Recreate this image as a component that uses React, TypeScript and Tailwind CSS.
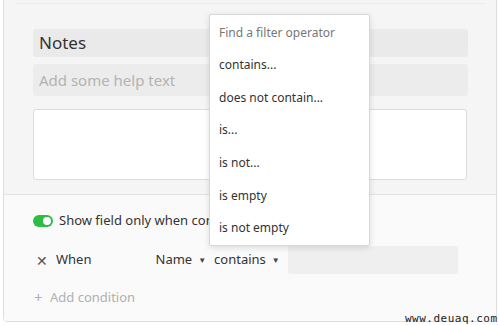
import React from "react";

const font = { fontFamily: '"Noto Sans", "Open Sans", sans-serif' };

const operators = [
  "contains...",
  "does not contain...",
  "is...",
  "is not...",
  "is empty",
  "is not empty",
];

function Caret() {
  return <span className="ml-[6px] text-[8px] text-[#444] relative top-[-1px]">▼</span>;
}

export default function App() {
  return (
    <div className="w-[499px] h-[325px] bg-white relative overflow-hidden" style={font}>
      <div className="absolute left-[3px] right-[2px] top-[-10px] bottom-[3px] border border-[#dedede] rounded-[4px] overflow-hidden flex flex-col">
        {/* field settings */}
        <div className="bg-[#f5f5f5] h-[204px] border-b border-[#e3e3e3] pl-[29px] pr-[28px] pt-[12px] flex flex-col">
          <div className="h-px bg-[#ececec] mx-[-18px]" />
          <div className="mt-[25px] h-[28px] bg-[#eaeaea] rounded-[3px] px-[6px] flex items-center text-[17px] text-[#333]">
            Notes
          </div>
          <div className="mt-[7px] h-[32px] bg-[#ececec] rounded-[3px] px-[6px] flex items-center text-[15px] text-[#b3b3b3]">
            Add some help text
          </div>
          <div className="mt-[13px] h-[71px] bg-white rounded-[3px] border border-[#dcdcdc] mr-[1px]" />
        </div>

        {/* conditions */}
        <div className="flex-1 bg-[#fafafa] pl-[29px] pr-[28px] pt-[15px] text-[13px] text-[#333]">
          <div className="flex items-center h-[22px]">
            <div className="w-[20px] h-[12px] rounded-full bg-[#2dbd45] relative">
              <div className="absolute right-[2px] top-[2px] w-[8px] h-[8px] rounded-full bg-white" />
            </div>
            <span className="ml-[6px]">Show field only when conditions are met</span>
          </div>
          <div className="flex items-center mt-[14px] h-[28px]">
            <span className="w-[23px] pl-[3px] text-[14px] text-[#555]">✕</span>
            <span>When</span>
            <span className="ml-[64px]">Name<Caret /></span>
            <span className="ml-[8px]">contains<Caret /></span>
            <div className="ml-[8px] w-[170px] h-[28px] bg-[#efefef] rounded-[2px]" />
          </div>
          <div className="flex items-center mt-[12px] text-[#b0b0b0]">
            <span className="text-[15px] w-[17px] pl-[1px]">+</span>
            <span>Add condition</span>
          </div>
        </div>
      </div>

      <div
        className="absolute left-[405px] top-[311px] text-[11px] text-[#222] tracking-[0.5px]"
        style={{ fontFamily: '"DejaVu Sans Mono", monospace' }}
      >
        www.deuaq.com
      </div>

      {/* operator menu */}
      <div className="absolute left-[209px] top-[14px] w-[161px] bg-white border border-[#d8d8d8] rounded-[2px] shadow-[0_2px_6px_rgba(0,0,0,0.12)] pt-[1px] text-[12px] text-[#333]">
        <div className="px-[9px] h-[33px] flex items-center text-[#777]">Find a filter operator</div>
        {operators.map((op) => (
          <div key={op} className="px-[9px] h-[32.6px] flex items-center">
            {op}
          </div>
        ))}
      </div>
    </div>
  );
}
